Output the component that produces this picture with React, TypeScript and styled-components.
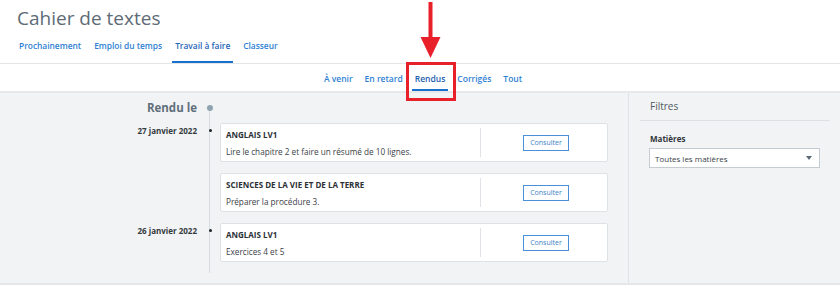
import React from "react";
import styled, { createGlobalStyle } from "styled-components";

const Global = createGlobalStyle`
  html, body { margin: 0; padding: 0; background: #ffffff; }
  body { font-family: "Open Sans", "Liberation Sans", sans-serif; width: 840px; height: 285px; overflow: hidden; }
  * { box-sizing: border-box; }
`;

const Page = styled.div`
  position: relative;
  width: 840px;
  height: 285px;
  display: flex;
  flex-direction: column;
`;

const Header = styled.header`
  padding: 6px 0 0 17px;
  border-bottom: 1px solid #e3e6e9;
`;

const Title = styled.h1`
  margin: 0;
  font-size: 19px;
  font-weight: 400;
  color: #5d6b76;
  line-height: 24px;
  height: 26px;
`;

const TabRow = styled.nav`
  display: flex;
  margin-top: 1px;
`;

const Tab = styled.a<{ $active?: boolean }>`
  display: block;
  font-size: 8.4px;
  font-weight: 600;
  color: ${(p) => (p.$active ? "#1f65b8" : "#2f7fd3")};
  padding: 7px 3px 10px;
  margin-right: 7px;
  line-height: 11px;
  border-bottom: 2px solid ${(p) => (p.$active ? "#1a6fcc" : "transparent")};
  &:first-child { margin-left: -1px; }
`;

const SubNav = styled.nav`
  height: 29px;
  display: flex;
  justify-content: center;
  padding-left: 6px;
  border-bottom: 2px solid #e6e8eb;
  background: #fff;
`;

const SubTab = styled.a<{ $active?: boolean }>`
  font-size: 8.5px;
  font-weight: 600;
  color: ${(p) => (p.$active ? "#1c5fae" : "#2f7fd3")};
  padding: 9px 3px 0;
  margin: 0 3px;
  line-height: 11px;
  height: 27px;
  border-bottom: 2px solid ${(p) => (p.$active ? "#1a6fcc" : "transparent")};
`;

const Main = styled.main`
  flex: 1;
  display: flex;
  background: #f2f3f5;
  border-bottom: 2px solid #e4e6e9;
`;

const Left = styled.section`
  width: 629px;
  border-right: 1px solid #dfe2e6;
  display: grid;
  grid-template-columns: 197px 23px 388px;
  grid-auto-rows: min-content;
  align-content: start;
  padding-top: 6px;
  position: relative;
`;

const TimelineLine = styled.div`
  position: absolute;
  left: 209px;
  top: 15px;
  bottom: 10px;
  width: 1px;
  background: #d7dce0;
`;

const Heading = styled.div`
  text-align: right;
  font-size: 11.5px;
  font-weight: 700;
  color: #5f6f7b;
  line-height: 18px;
`;

const BigDot = styled.span`
  display: block;
  width: 6px;
  height: 6px;
  border-radius: 50%;
  background: #8ea2af;
  margin: 6px 0 0 10px;
  position: relative;
`;

const DateLabel = styled.div<{ $first?: boolean }>`
  text-align: right;
  font-size: 8px;
  font-weight: 700;
  color: #333a40;
  line-height: 12px;
  padding-top: 2px;
  margin-top: ${(p) => (p.$first ? "0" : "11px")};
`;

const SmallDot = styled.span<{ $first?: boolean }>`
  display: block;
  width: 3px;
  height: 3px;
  border-radius: 50%;
  background: #1d2329;
  margin: ${(p) => (p.$first ? "6px" : "17px")} 0 0 11.5px;
  position: relative;
`;

const Spacer = styled.div`
  grid-column: 1 / -1;
  height: 6px;
`;

const Card = styled.article<{ $first?: boolean }>`
  height: 39px;
  margin-top: ${(p) => (p.$first ? "0" : "11px")};
  background: #fff;
  border: 1px solid #dde2e6;
  border-radius: 2px;
  display: flex;
`;

const CardBody = styled.div`
  width: 260px;
  padding: 1px 0 0 5px;
  border-right: 1px solid #dfe3e7;
  margin: 4px 0;
`;

const Subject = styled.div`
  font-size: 8px;
  font-weight: 700;
  color: #2b3136;
  line-height: 11px;
`;

const Desc = styled.div`
  font-size: 8.2px;
  color: #3a4146;
  line-height: 12px;
  margin-top: 6px;
`;

const CardAction = styled.div`
  flex: 1;
  display: flex;
  justify-content: center;
  align-items: flex-start;
  padding-top: 11px;
  padding-left: 4px;
`;

const Button = styled.button`
  width: 46px;
  height: 16px;
  border: 1px solid #4a8fd8;
  background: #fff;
  color: #3b7fc9;
  font-family: "Open Sans", "Liberation Sans", sans-serif;
  font-size: 7px;
  padding: 0;
  line-height: 14px;
  border-radius: 0;
`;

const Right = styled.aside`
  flex: 1;
  padding: 5px 10px 0 11px;
`;

const PanelTitle = styled.div`
  font-size: 10px;
  color: #4f5a62;
  padding: 0 0 6px 10px;
  line-height: 16px;
  border-bottom: 1px solid #dde1e5;
`;

const FieldLabel = styled.div`
  font-size: 8px;
  font-weight: 700;
  color: #2f353a;
  margin: 12px 0 0 10px;
  line-height: 11px;
`;

const Select = styled.div`
  margin: 4px 0 0 9px;
  width: 171px;
  height: 20px;
  border: 1px solid #c4ccd2;
  background: #fff;
  display: flex;
  align-items: center;
  justify-content: space-between;
  padding: 0 7px 0 5px;
  font-size: 8px;
  color: #3a4247;
`;

const Caret = styled.span`
  width: 0;
  height: 0;
  border-left: 3.5px solid transparent;
  border-right: 3.5px solid transparent;
  border-top: 4px solid #5a6a76;
`;

const Highlight = styled.div`
  position: absolute;
  left: 406px;
  top: 62px;
  width: 50px;
  height: 39px;
  border: 3px solid #e8202a;
  pointer-events: none;
`;

const Arrow = styled.svg`
  position: absolute;
  left: 418px;
  top: 2px;
  pointer-events: none;
`;

type Item = { subject: string; desc: string };
const groups: { date: string; items: Item[] }[] = [
  {
    date: "27 janvier 2022",
    items: [
      { subject: "ANGLAIS LV1", desc: "Lire le chapitre 2 et faire un résumé de 10 lignes." },
      { subject: "SCIENCES DE LA VIE ET DE LA TERRE", desc: "Préparer la procédure 3." },
    ],
  },
  {
    date: "26 janvier 2022",
    items: [{ subject: "ANGLAIS LV1", desc: "Exercices 4 et 5" }],
  },
];

export default function App() {
  let first = true;
  return (
    <Page>
      <Global />
      <Header>
        <Title>Cahier de textes</Title>
        <TabRow>
          <Tab>Prochainement</Tab>
          <Tab>Emploi du temps</Tab>
          <Tab $active>Travail à faire</Tab>
          <Tab>Classeur</Tab>
        </TabRow>
      </Header>
      <SubNav>
        <SubTab>À venir</SubTab>
        <SubTab>En retard</SubTab>
        <SubTab $active>Rendus</SubTab>
        <SubTab>Corrigés</SubTab>
        <SubTab>Tout</SubTab>
      </SubNav>
      <Main>
        <Left>
          <TimelineLine />
          <Heading>Rendu le</Heading>
          <BigDot />
          <div />
          <Spacer />
          {groups.map((g) =>
            g.items.map((it, i) => {
              const isFirst = first;
              first = false;
              return (
                <React.Fragment key={g.date + i}>
                  {i === 0 ? <DateLabel $first={isFirst}>{g.date}</DateLabel> : <div />}
                  {i === 0 ? <SmallDot $first={isFirst} /> : <div />}
                  <Card $first={isFirst}>
                    <CardBody>
                      <Subject>{it.subject}</Subject>
                      <Desc>{it.desc}</Desc>
                    </CardBody>
                    <CardAction>
                      <Button>Consulter</Button>
                    </CardAction>
                  </Card>
                </React.Fragment>
              );
            })
          )}
        </Left>
        <Right>
          <PanelTitle>Filtres</PanelTitle>
          <FieldLabel>Matières</FieldLabel>
          <Select>
            <span>Toutes les matières</span>
            <Caret />
          </Select>
        </Right>
      </Main>
      <Arrow width="26" height="56" viewBox="0 0 26 56">
        <rect x="10.5" y="0" width="4" height="38" fill="#e8202a" />
        <polygon points="2.5,35 22.5,35 12.5,56" fill="#e8202a" />
      </Arrow>
      <Highlight />
    </Page>
  );
}
